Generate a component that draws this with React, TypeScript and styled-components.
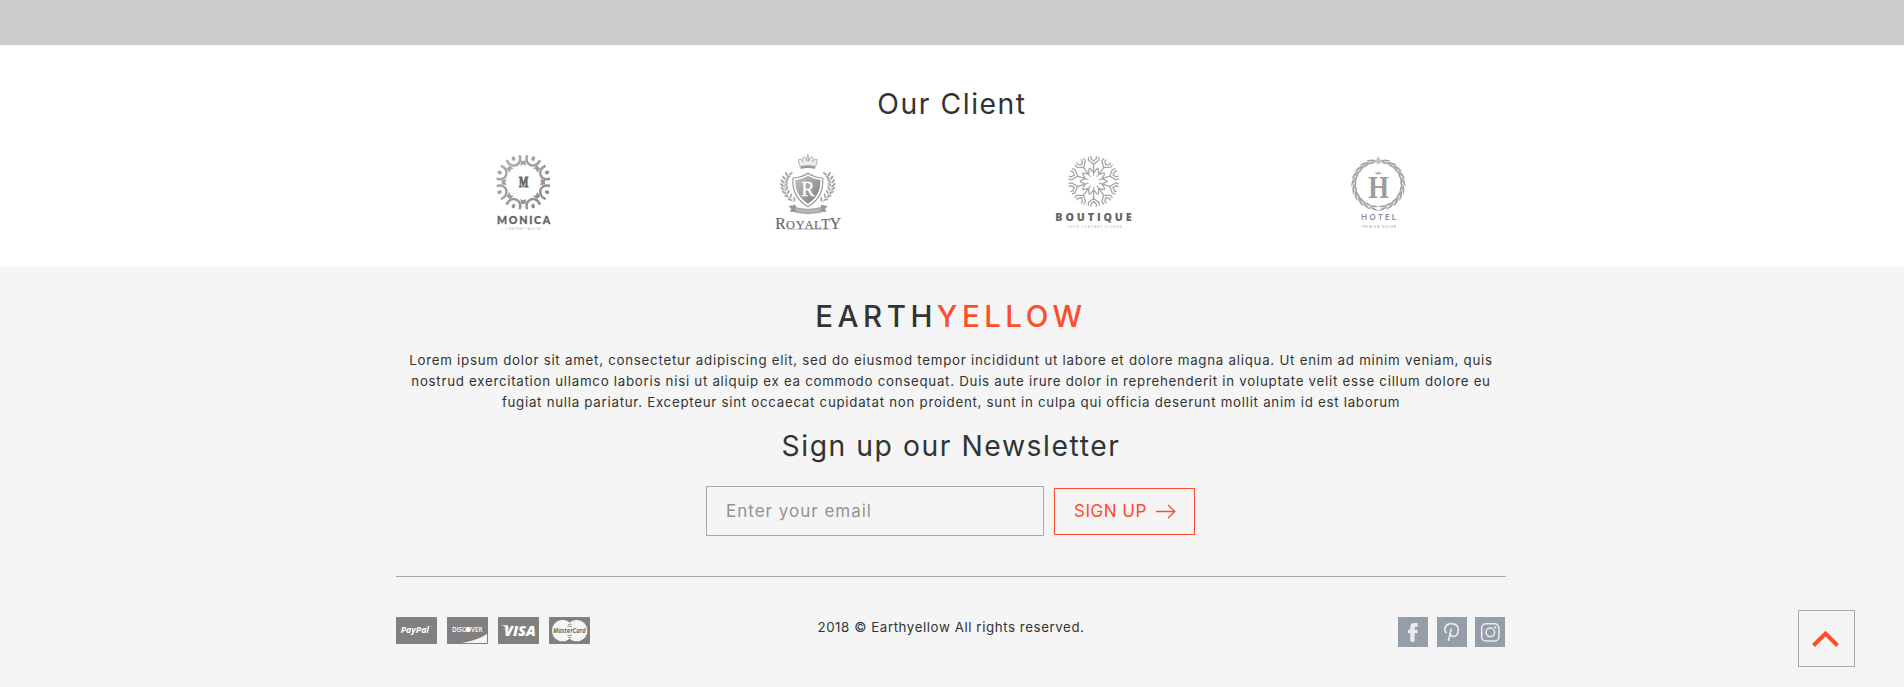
import React from "react";
import styled, { createGlobalStyle } from "styled-components";

const Global = createGlobalStyle`
  * { box-sizing: border-box; }
  body { margin: 0; background: #fff; font-family: Inter, "Liberation Sans", sans-serif; color: #333; font-feature-settings: "calt" 0; }
  h2, p { margin: 0; font-weight: 400; }
`;

const Page = styled.div`
  position: relative;
  height: 687px;
  overflow: hidden;
  display: flex;
  flex-direction: column;
`;
const Band = styled.div`height: 45px; flex: none; background: #ccc;`;
const Clients = styled.section`
  height: 222px;
  flex: none;
  background: #fff;
  padding-top: 39px;
  display: flex;
  flex-direction: column;
  align-items: center;
`;
const Heading = styled.h2`
  font-size: 28.3px;
  line-height: 40px;
  height: 40px;
  white-space: nowrap;
  letter-spacing: 1.55px;
`;
const LogoGrid = styled.div`
  width: 1140px;
  margin-top: 16px;
  display: grid;
  grid-template-columns: repeat(4, 1fr);
  justify-items: center;
`;
const LogoSvg = styled.svg`width: 101px; height: 100px; display: block;`;

const Footer = styled.footer`
  flex: 1;
  background: #f5f5f5;
  padding-right: 2px;
  display: flex;
  flex-direction: column;
  align-items: center;
`;
const Inner = styled.div`width: 1110px; display: flex; flex-direction: column; align-items: center;`;
const Brand = styled.div`
  margin-top: 29px;
  height: 40px;
  line-height: 40px;
  font-size: 29.5px;
  font-weight: 500;
  letter-spacing: 4.5px;
  white-space: nowrap;
  span { color: #ff4c2b; }
`;
const About = styled.p`
  margin: 14px 0 13px;
  display: flex;
  flex-direction: column;
  align-items: center;
`;
const Line = styled.span<{ $ls: number }>`
  font-size: 13.3px;
  line-height: 21px;
  white-space: nowrap;
  letter-spacing: ${(p) => p.$ls}px;
`;
const Form = styled.form`
  margin: 20px 1px 0 0;
  display: flex;
  align-items: center;
  gap: 10px;
`;
const Email = styled.input`
  width: 338px;
  height: 50px;
  border: 1px solid #a9a9a9;
  background: transparent;
  padding: 0 19px;
  font: 400 17px Inter, sans-serif;
  letter-spacing: 1px;
  outline: 0;
  &::placeholder { color: #939393; opacity: 1; }
`;
const SignUp = styled.button`
  width: 141px;
  height: 47px;
  border: 1px solid #ff4c2b;
  background: transparent;
  color: #ff4c2b;
  display: flex;
  align-items: center;
  padding: 0 18px 0 19px;
  font: 400 17px Inter, sans-serif;
  letter-spacing: 0.5px;
  white-space: nowrap;
  svg { margin-left: auto; flex: none; }
`;
const Rule = styled.div`width: 100%; height: 1px; margin-top: 40px; background: #a9a9a9;`;
const Bottom = styled.div`
  width: 100%;
  margin-top: 40px;
  display: grid;
  grid-template-columns: 1fr auto 1fr;
  align-items: start;
`;
const Cards = styled.div`display: flex; gap: 10px; svg { display: block; }`;
const Social = styled.div`display: flex; justify-content: flex-end; gap: 8.5px; padding-right: 1px; svg { display: block; }`;
const ToTop = styled.button`
  position: absolute;
  left: 1798px;
  top: 610px;
  width: 57px;
  height: 57px;
  padding: 0;
  border: 1px solid #a9a9a9;
  background: transparent;
  svg { display: block; }
`;

const range = (n: number) => Array.from({ length: n }, (_, i) => i);

function Monica() {
  return (
    <LogoSvg viewBox="-18 0 303 300">
      <defs>
        <linearGradient id="mg" gradientUnits="userSpaceOnUse" x1="60" y1="60" x2="200" y2="200">
          <stop offset="0" stopColor="#adadad" /><stop offset=".5" stopColor="#9c9c9c" /><stop offset="1" stopColor="#888" />
        </linearGradient>
      </defs>
      <mask id="mm" maskUnits="userSpaceOnUse" x="40" y="40" width="190" height="180">
        {range(8).map((i) => (
          <g key={i} transform={`rotate(${i * 45} 130 127)`}>
            <g transform="rotate(22.5 130 127)">
              <ellipse cx="130" cy="50" rx="5.5" ry="7" fill="#fff" />
              <path d="M109 46Q111 70 130 71Q149 70 151 46" fill="none" stroke="#fff" strokeWidth="7.5" />
            </g>
            <path d="M124 62L136 62L139 77L130 73L121 77Z" fill="#fff" />
          </g>
        ))}
      </mask>
      <rect x="50" y="46" width="160" height="162" fill="url(#mg)" mask="url(#mm)" />
      <text x="117" y="141" fontFamily="Liberation Serif" fontWeight="700" fontSize="43" fill="#666" stroke="#666" strokeWidth="2.5" textLength="28" lengthAdjust="spacingAndGlyphs">M</text>
      <text x="51" y="251" fontFamily="Lato" fontWeight="900" fontSize="32" fill="#666" stroke="#666" textLength="160">MONICA</text>
      <text x="79" y="269" fontFamily="Open Sans" fontSize="8" fill="#aaa" textLength="104">COMPANY TAGLINE</text>
    </LogoSvg>
  );
}

function Royalty() {
  const branch = (
    <g>
      <path d="M86 102Q55 145 99 187" fill="none" stroke="#b5b5b5" strokeWidth="2" />
      {range(8).map((i) => {
        const t = i / 7;
        const x = (1 - t) * (1 - t) * 86 + 2 * t * (1 - t) * 55 + t * t * 97;
        const y = 104 + 77 * t;
        return (
          <g key={i} fill="#a3a3a3">
            <ellipse cx={x - 7} cy={y - 2} rx="7.5" ry="3" transform={`rotate(${62 - t * 42} ${x - 7} ${y - 2})`} />
            <ellipse cx={x + 6} cy={y - 3} rx="7.5" ry="2.8" transform={`rotate(${-35 - t * 50} ${x + 6} ${y - 3})`} />
          </g>
        );
      })}
    </g>
  );
  return (
    <LogoSvg viewBox="-3 0 303 300">
      <defs>
        <linearGradient id="rg" x1="0" y1="0" x2="1" y2="1">
          <stop offset="0" stopColor="#c2c2c2" /><stop offset="1" stopColor="#7c7c7c" />
        </linearGradient>
      </defs>
      <path d="M121 80Q113 66 116 58Q124 54 129 66Q125 52 133 50Q140 52 141 64Q139 50 143.500 47Q148 50 146 64Q148 52 154 50Q162 52 158 66Q164 54 171 58Q174 66 166 80" fill="#eee" stroke="#aaa" strokeWidth="2.8" />
      <path d="M121 79Q143 73 166 79L165 87Q143 81 122 87Z" fill="#999" />
      <circle cx="143.5" cy="45" r="2.6" fill="#aaa" />
      {branch}
      <g transform="translate(287 0) scale(-1 1)">{branch}</g>
      <path d="M144 100Q163 113 188 114Q193 171 144 200Q94 171 99 114Q125 113 144 100Z" fill="#fff" stroke="#999" strokeWidth="3.5" />
      <path d="M144 107Q162 118 181 119Q184 165 144 191Q103 165 106 119Q127 118 144 107Z" fill="url(#rg)" />
      <text x="124" y="167" fontFamily="Liberation Serif" fontSize="62" fill="#fff" stroke="#fff" textLength="40" lengthAdjust="spacingAndGlyphs">R</text>
      <path d="M86 198L107 194L109 208L184 208L182 194L203 198L195 207L200 215L181 216Q145 225 108 216L89 215L94 207Z" fill="#999" />
      <path d="M104 202Q144 213 184 202L183 217Q144 225 106 217Z" fill="#b4b4b4" stroke="#888" strokeWidth="1.5" />
      <text y="267" fontFamily="Liberation Serif" fill="#6a6a6a" stroke="#6a6a6a" strokeWidth=".6">
        <tspan x="46" fontSize="47">R</tspan>
        <tspan x="78 107 134 162" fontSize="37">OYAL</tspan>
        <tspan x="184" fontSize="43">T</tspan>
        <tspan x="209" fontSize="47">Y</tspan>
      </text>
      <path d="M82 268H212" stroke="#aaa" strokeWidth="2" />
    </LogoSvg>
  );
}

function Boutique() {
  return (
    <LogoSvg viewBox="12 0 303 300">
      {range(10).map((i) => (
        <g key={i} transform={`rotate(${i * 36} 161 124)`} fill="none" stroke="#a6a6a6" strokeWidth="3.8">
          <path d="M145 50V60L161 73L177 60V50M153 48V56L161 63L169 56V48M161 73V96M149 84L161 98L173 84" />
          <path d="M161 98V108" strokeWidth="3" />
        </g>
      ))}
      <text x="46" y="242" fontFamily="Open Sans" fontWeight="800" fontSize="32" fill="#666" textLength="229">BOUTIQUE</text>
      <text x="83" y="264" fontFamily="Open Sans" fontSize="9" fill="#aaa" textLength="162">YOUR COMPANY SLOGAN</text>
    </LogoSvg>
  );
}

function Hotel() {
  const side = (
    <g fill="#a2a2a2">
      {range(10).map((i) => {
        const d = -106 - i * 17;
        const a = (d * Math.PI) / 180;
        const x = 130 + 75 * Math.cos(a);
        const y = 133 + 73 * Math.sin(a);
        return (
          <g key={i}>
            <path d="M-17 2Q-3 -8 16 -3Q2 4 -17 2Z" transform={`translate(${x} ${y}) rotate(${d + 112})`} />
            <path d="M-15 4Q1 0 15 8Q1 12 -15 4Z" transform={`translate(${x} ${y}) rotate(${d + 76})`} />
          </g>
        );
      })}
    </g>
  );
  return (
    <LogoSvg viewBox="-18 0 303 300">
      {side}
      <g transform="translate(260 0) scale(-1 1)">{side}</g>
      <path d="M130 48L137 60L145 64L130 73L115 64L123 60Z" fill="#c4c4c4" />
      <path d="M120 96L126 99L130 94L134 99L140 96L137 103H123Z" fill="#aaa" />
      <text x="100" y="173" fontFamily="Liberation Serif" fontWeight="700" fontSize="94" fill="#9c9c9c" textLength="62" lengthAdjust="spacingAndGlyphs">H</text>
      <text x="78" y="240" fontFamily="Open Sans" fontWeight="600" fontSize="25" fill="#8a8a8a" textLength="105">HOTEL</text>
      <text x="80" y="263" fontFamily="Open Sans" fontSize="8" fill="#888" textLength="103">PREMIUM DESIGN</text>
    </LogoSvg>
  );
}

const CardBase = ({ children }: { children: React.ReactNode }) => (
  <svg width="41" height="27" viewBox="0 0 123 81">
    <rect width="123" height="81" rx="3" fill="#808080" />
    {children}
  </svg>
);
const cardFont = { fontFamily: "Open Sans", fontWeight: 700, lengthAdjust: "spacingAndGlyphs" as const };

export default function App() {
  return (
    <Page>
      <Global />
      <Band />
      <Clients>
        <Heading>Our Client</Heading>
        <LogoGrid><Monica /><Royalty /><Boutique /><Hotel /></LogoGrid>
      </Clients>
      <Footer>
        <Inner>
          <Brand>EARTH<span>YELLOW</span></Brand>
          <About>
            <Line $ls={0.743}>Lorem ipsum dolor sit amet, consectetur adipiscing elit, sed do eiusmod tempor incididunt ut labore et dolore magna aliqua. Ut enim ad minim veniam, quis</Line>
            <Line $ls={0.726}>nostrud exercitation ullamco laboris nisi ut aliquip ex ea commodo consequat. Duis aute irure dolor in reprehenderit in voluptate velit esse cillum dolore eu</Line>
            <Line $ls={0.724}>fugiat nulla pariatur. Excepteur sint occaecat cupidatat non proident, sunt in culpa qui officia deserunt mollit anim id est laborum</Line>
          </About>
          <Heading>Sign up our Newsletter</Heading>
          <Form onSubmit={(e) => e.preventDefault()}>
            <Email type="email" placeholder="Enter your email" />
            <SignUp type="submit">
              SIGN UP
              <svg width="20" height="15" viewBox="0 0 20 15" fill="none" stroke="#ff4c2b" strokeWidth="1.3"><path d="M0 7.500H19M12 1L18.800 7.500L12 14" /></svg>
            </SignUp>
          </Form>
          <Rule />
          <Bottom>
            <Cards>
              <CardBase>
                <text x="14" y="47" {...cardFont} fontStyle="italic" fontSize="25" fill="#fff" textLength="85">PayPal</text>
                <path d="M103 29H109" stroke="#bbb" strokeWidth="2" />
              </CardBase>
              <CardBase>
                <circle cx="63" cy="38" r="7.5" fill="#fff" />
                <path d="M45 78Q92 70 120 51V78Z" fill="#f5f5f5" />
                <text x="15" y="45" {...cardFont} fontWeight={600} fontSize="20" fill="#fff" textLength="92">DISCOVER</text>
              </CardBase>
              <CardBase>
                <text x="18" y="56" {...cardFont} fontWeight={800} fontStyle="italic" fontSize="42" fill="#fff" textLength="95">VISA</text>
                <path d="M9 25H29L33 38Q25 28 9 25Z" fill="#fff" />
              </CardBase>
              <CardBase>
                <circle cx="41" cy="41" r="32" fill="#f5f5f5" /><circle cx="83" cy="41" r="32" fill="#f5f5f5" />
                <path d="M57 22H67M55 28H69M55 55H69M57 61H67M60 67H64" stroke="#808080" strokeWidth="2.5" />
                <text x="12" y="48" {...cardFont} fontStyle="italic" fontSize="21" fill="#707070" textLength="98">MasterCard</text>
              </CardBase>
            </Cards>
            <Line $ls={0.58}>2018 © Earthyellow All rights reserved.</Line>
            <Social>
              <svg width="30" height="30" viewBox="0 0 90 90"><rect width="90" height="90" fill="#959da9" /><path d="M37 74V49H30V38H37V31Q37 18 50 18H59V29H53Q50 29 50 33V38H59L58 49H50V74Z" fill="#e9ecef" /></svg>
              <svg width="30" height="30" viewBox="0 0 90 90"><rect width="90" height="90" fill="#959da9" /><path d="M28 48C17 35 27 20 44 20C58 20 65 29 64 40C63 54 54 60 47 58Q42 57 40 52M43 35L34 72" fill="none" stroke="#e9ecef" strokeWidth="5" /></svg>
              <svg width="30" height="30" viewBox="0 0 90 90"><rect width="90" height="90" fill="#959da9" /><g fill="none" stroke="#e9ecef" strokeWidth="4.5"><rect x="20" y="20" width="52" height="52" rx="13" /><circle cx="46" cy="46" r="13" /></g><circle cx="61" cy="31" r="3.5" fill="#e9ecef" /></svg>
            </Social>
          </Bottom>
        </Inner>
      </Footer>
      <ToTop aria-label="Back to top">
        <svg width="55" height="55" viewBox="0 0 55 55"><path d="M14.500 34.500L26.500 22.500L38.500 34.500" fill="none" stroke="#ff4c2b" strokeWidth="4" /></svg>
      </ToTop>
    </Page>
  );
}
